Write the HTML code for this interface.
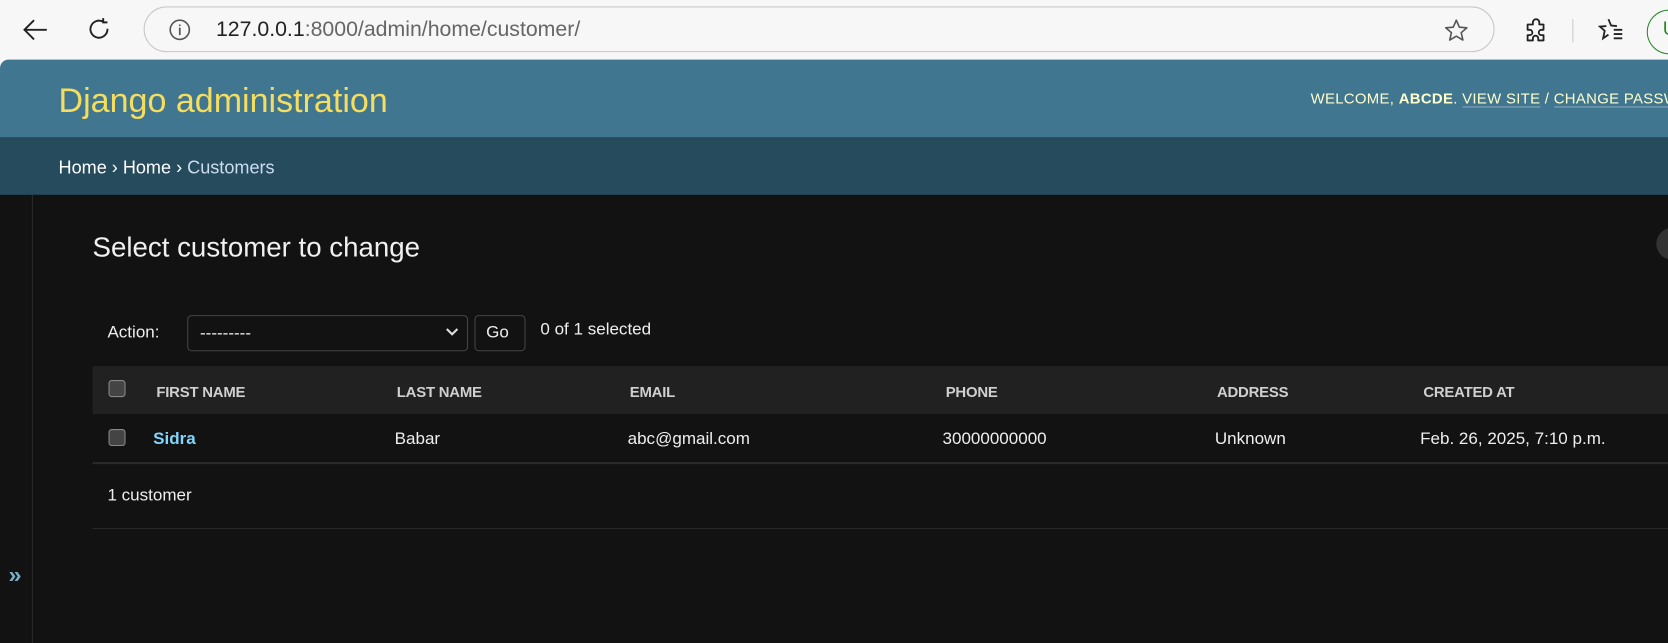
<!DOCTYPE html>
<html><head><meta charset="utf-8"><style>
html,body{margin:0;padding:0;width:1668px;height:643px;overflow:hidden;background:#121212;}
#w{position:absolute;left:0;top:0;width:1568px;height:604px;transform:scale(1.06378,1.06457);transform-origin:0 0;font-family:"Liberation Sans",sans-serif;}
.a{position:absolute;white-space:nowrap;}
#chrome{position:absolute;left:0;top:0;width:1568px;height:64px;background:#f7f7f7;}
#pill{position:absolute;left:135px;top:6px;width:1268px;height:41px;border:1.5px solid #c8c8c8;border-radius:22px;background:#f7f7f7;}
#hdr{position:absolute;left:0;top:56px;width:1568px;height:73px;background:#417690;border-top-left-radius:8px;}
#bc{position:absolute;left:0;top:129px;width:1568px;height:54px;background:#264b5d;}
.th{position:absolute;top:344px;height:45px;left:87px;width:1481px;background:#212121;}
.h{font-size:14px;font-weight:bold;color:#d0d0d0;top:360px;letter-spacing:-0.2px;}
.c{font-size:16px;color:#eee;top:404px;}
.cb{position:absolute;width:14px;height:14px;border:1px solid #888;background:#444;border-radius:3px;}
</style></head><body><div id="w">
<div id="chrome"></div>
<svg class="a" style="left:20px;top:17px" width="26" height="22" viewBox="0 0 26 22"><path d="M24 11H3M12 2L3 11l9 9" fill="none" stroke="#222" stroke-width="1.8"/></svg>
<svg class="a" style="left:82px;top:16px" width="24" height="24" viewBox="0 0 24 24"><path d="M19 11A8 8 0 1 1 15 4.5M15 1v4h4" fill="none" stroke="#222" stroke-width="1.8"/></svg>
<div id="pill"></div>
<svg class="a" style="left:158px;top:17px" width="22" height="22" viewBox="0 0 22 22"><circle cx="11" cy="11" r="9" fill="none" stroke="#555" stroke-width="1.5"/><path d="M11 9v7M11 6v1.5" stroke="#555" stroke-width="1.6"/></svg>
<div class="a" style="left:203px;top:17px;font-size:20px;color:#222;">127.0.0.1<span style="color:#666">:8000/admin/home/customer/</span></div>
<svg class="a" style="left:1357px;top:17px" width="24" height="23" viewBox="0 0 24 23"><path d="M12 2l2.9 6.5 7 .6-5.3 4.6 1.6 6.9L12 17l-6.2 3.6 1.6-6.9L2.1 9.1l7-.6z" fill="none" stroke="#555" stroke-width="1.5" stroke-linejoin="round"/></svg>
<svg class="a" style="left:1432px;top:17px" width="24" height="24" viewBox="0 0 24 24"><path d="M9 4a3 3 0 0 1 6 0v2h4v5h-2a2.5 2.5 0 0 0 0 5h2v5h-5v-2a2.5 2.5 0 0 0-5 0v2H4v-5h2a2.5 2.5 0 0 0 0-5H4V6h5z" fill="none" stroke="#222" stroke-width="1.7" stroke-linejoin="round"/></svg>
<div class="a" style="left:1478px;top:18px;width:1px;height:22px;background:#ccc"></div>
<svg class="a" style="left:1502px;top:16px" width="26" height="24" viewBox="0 0 26 24"><path d="M10 2l2.5 6 5.5.5M8 8.5L2 9l4.5 4-1.5 7L10 16.5M15 12h8M15 16h8M15 20h8" fill="none" stroke="#222" stroke-width="1.7"/></svg>
<div class="a" style="left:1548px;top:9px;width:40px;height:40px;border:1.5px solid #2a8a2a;border-radius:50%;"></div>
<div class="a" style="left:1563px;top:17px;font-size:18px;color:#2a8a2a;">U</div>
<div id="hdr"></div>
<div class="a" style="left:55px;top:76px;font-size:32px;color:#f5dd5d;font-weight:300;">Django administration</div>
<div class="a" style="left:1232px;top:84px;font-size:14px;color:#ffc;letter-spacing:0.3px;">WELCOME, <b>ABCDE</b>. <span style="border-bottom:1px solid #8ab">VIEW SITE</span> / <span style="border-bottom:1px solid #8ab">CHANGE PASSWORD</span></div>
<div id="bc"></div>
<div class="a" style="left:55px;top:148px;font-size:17px;color:#fff;">Home › Home › <span style="color:#cde">Customers</span></div>
<div class="a" style="left:30px;top:183px;width:1px;height:421px;background:#2a2a2a"></div>
<div class="a" style="left:8px;top:527px;font-size:22px;color:#79aec8;font-weight:bold;">»</div>
<div class="a" style="left:1557px;top:214px;width:30px;height:30px;border-radius:50%;background:#333"></div>
<div class="a" style="left:87px;top:217px;font-size:26px;color:#f0f0f0;font-weight:300;">Select customer to change</div>
<div class="a" style="left:101px;top:304px;font-size:16px;color:#eee;">Action:</div>
<div class="a" style="left:176px;top:296px;width:262px;height:32px;border:1px solid #444;border-radius:4px;background:#121212;"></div>
<div class="a" style="left:188px;top:305px;font-size:16px;color:#eee;">---------</div>
<svg class="a" style="left:418px;top:306px" width="14" height="12" viewBox="0 0 14 12"><path d="M2 3l5 5 5-5" fill="none" stroke="#ddd" stroke-width="2"/></svg>
<div class="a" style="left:446px;top:296px;width:46px;height:32px;border:1px solid #444;border-radius:4px;background:#121212;"></div>
<div class="a" style="left:457px;top:304px;font-size:16px;color:#eee;">Go</div>
<div class="a" style="left:508px;top:301px;font-size:16px;color:#eee;">0 of 1 selected</div>
<div class="th"></div>
<div class="cb" style="left:102px;top:357px"></div>
<div class="a h" style="left:147px">FIRST NAME</div>
<div class="a h" style="left:373px">LAST NAME</div>
<div class="a h" style="left:592px">EMAIL</div>
<div class="a h" style="left:889px">PHONE</div>
<div class="a h" style="left:1144px">ADDRESS</div>
<div class="a h" style="left:1338px">CREATED AT</div>
<div class="cb" style="left:102px;top:403px"></div>
<div class="a c" style="left:144px;color:#81d4fa;font-weight:bold;">Sidra</div>
<div class="a c" style="left:371px">Babar</div>
<div class="a c" style="left:590px">abc@gmail.com</div>
<div class="a c" style="left:886px">30000000000</div>
<div class="a c" style="left:1142px">Unknown</div>
<div class="a c" style="left:1335px">Feb. 26, 2025, 7:10 p.m.</div>
<div class="a" style="left:87px;top:434px;width:1481px;height:2px;background:#2a2a2a"></div>
<div class="a" style="left:101px;top:457px;font-size:16px;color:#eee;">1 customer</div>
<div class="a" style="left:87px;top:496px;width:1481px;height:1px;background:#2a2a2a"></div>
</div></body></html>
